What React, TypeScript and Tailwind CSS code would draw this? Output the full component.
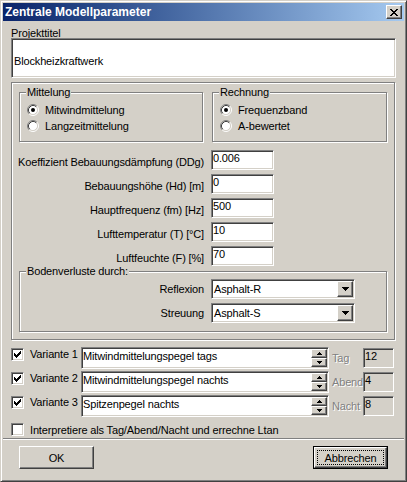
import React from "react";

// classic 3D borders
const sunken =
  "border border-t-[#808080] border-l-[#808080] border-r-white border-b-white shadow-[inset_1px_1px_0_#404040,inset_-1px_-1px_0_#d4d0c8]";
const raised =
  "border border-t-white border-l-white border-r-[#404040] border-b-[#404040] shadow-[inset_-1px_-1px_0_#808080]";
const etched = "border border-[#808080] shadow-[1px_1px_0_#fff,inset_1px_1px_0_#fff]";
const disabledText = "text-[#808080] [text-shadow:1px_1px_0_#fff]";

const CHECK = ["......X", ".....XX", "X...XXX", "XX.XXX.", "XXXXX..", ".XXX...", "..X...."];
const CLOSE = ["XX....XX", ".XX..XX.", "..XXXX..", "...XX...", "..XXXX..", ".XX..XX.", "XX....XX"];
const DOWN = ["XXXXXXX", ".XXXXX.", "..XXX..", "...X..."];
const UP_SM = ["..X..", ".XXX.", "XXXXX"];
const DOWN_SM = ["XXXXX", ".XXX.", "..X.."];

const Pix = ({ rows, color = "#000" }: { rows: string[]; color?: string }) => (
  <svg width={rows[0].length} height={rows.length} shapeRendering="crispEdges" className="block">
    {rows.flatMap((r, y) =>
      r
        .split("")
        .map((c, x) =>
          c === "X" ? <rect key={`${x}-${y}`} x={x} y={y} width={1} height={1} fill={color} /> : null
        )
    )}
  </svg>
);

const CheckBox = ({ checked = false, className = "" }: { checked?: boolean; className?: string }) => (
  <span className={`${sunken} bg-white w-[13px] h-[13px] shrink-0 flex items-center justify-center ${className}`}>
    {checked && <Pix rows={CHECK} />}
  </span>
);

const Radio = ({ checked = false }: { checked?: boolean }) => (
  <svg width={12} height={12} className="shrink-0 block">
    <circle cx={6} cy={6} r={4.5} fill="#fff" />
    <path d="M2.11 9.89A5.5 5.5 0 0 1 9.89 2.11" stroke="#808080" fill="none" />
    <path d="M9.89 2.11A5.5 5.5 0 0 1 2.11 9.89" stroke="#fff" fill="none" />
    <path d="M2.82 9.18A4.5 4.5 0 0 1 9.18 2.82" stroke="#404040" fill="none" />
    <path d="M9.18 2.82A4.5 4.5 0 0 1 2.82 9.18" stroke="#d4d0c8" fill="none" />
    {checked && <circle cx={6} cy={6} r={2} fill="#000" />}
  </svg>
);

const RadioRow = ({ label, checked }: { label: string; checked?: boolean }) => (
  <div className="flex items-center h-[16px] gap-[6px]">
    <Radio checked={checked} />
    <span>{label}</span>
  </div>
);

const Group = ({
  label,
  className,
  children,
}: {
  label: string;
  className: string;
  children: React.ReactNode;
}) => (
  <div className={`relative ${etched} ${className}`}>
    <span className="absolute left-[6px] -top-[8px] px-[1px] bg-[#d4d0c8] leading-[14px]">{label}</span>
    {children}
  </div>
);

const params: [string, string][] = [
  ["Koeffizient Bebauungsdämpfung (DDg)", "0.006"],
  ["Bebauungshöhe (Hd) [m]", "0"],
  ["Hauptfrequenz (fm) [Hz]", "500"],
  ["Lufttemperatur (T) [°C]", "10"],
  ["Luftfeuchte (F) [%]", "70"],
];

const combos: [string, string][] = [
  ["Reflexion", "Asphalt-R"],
  ["Streuung", "Asphalt-S"],
];

const variants: [string, string, string, string][] = [
  ["Variante 1", "Mitwindmittelungspegel tags", "Tag", "12"],
  ["Variante 2", "Mitwindmittelungspegel nachts", "Abend", "4"],
  ["Variante 3", "Spitzenpegel nachts", "Nacht", "8"],
];

export default function App() {
  return (
    <div className="w-[407px] h-[482px] bg-[#d4d0c8] font-['Liberation_Sans',Arial,sans-serif] text-[11px] tracking-[-0.15px] text-black leading-[14px] select-none">
      <div className="w-full h-full border border-t-[#d4d0c8] border-l-[#d4d0c8] border-r-[#404040] border-b-[#404040] shadow-[inset_1px_1px_0_#fff,inset_-1px_-1px_0_#808080] p-[2px] flex flex-col">
        {/* title bar */}
        <div className="h-[18px] shrink-0 bg-linear-to-r from-[#0a246a] to-[#a6caf0] flex items-center justify-between px-[2px]">
          <span className="text-white font-bold text-[12px] tracking-normal leading-[18px]">
            Zentrale Modellparameter
          </span>
          <div className={`${raised} bg-[#d4d0c8] w-[16px] h-[14px] flex items-center justify-center`}>
            <Pix rows={CLOSE} />
          </div>
        </div>

        <div className="pl-[8px] flex flex-col">
          <div className="mt-[5px] h-[12px]">Projekttitel</div>
          <div className={`${sunken} bg-white w-[385px] h-[40px] pl-[2px] pt-[6px] flex items-center`}>
            Blockheizkraftwerk
          </div>

          {/* main panel */}
          <div className={`${etched} mt-[4px] w-[384px] h-[258px] flex flex-col`}>
            <div className="mt-[9px] ml-[7px] flex">
              <Group label="Mittelung" className="w-[184px] h-[50px]">
                <div className="mt-[9px] ml-[7px] flex flex-col">
                  <RadioRow checked label="Mitwindmittelung" />
                  <RadioRow label="Langzeitmittelung" />
                </div>
              </Group>
              <Group label="Rechnung" className="ml-[9px] w-[175px] h-[50px]">
                <div className="mt-[9px] ml-[7px] flex flex-col">
                  <RadioRow checked label="Frequenzband" />
                  <RadioRow label="A-bewertet" />
                </div>
              </Group>
            </div>

            <div className="mt-[8px] flex flex-col gap-[4px]">
              {params.map(([label, value]) => (
                <div key={label} className="flex h-[20px]">
                  <div className="w-[192px] text-right leading-[20px] pt-[2px]">{label}</div>
                  <div className={`${sunken} bg-white ml-[7px] w-[63px] h-[20px] pl-[1px] leading-[14px]`}>
                    {value}
                  </div>
                </div>
              ))}
            </div>

            <Group label="Bodenverluste durch:" className="mt-[5px] ml-[7px] w-[368px] h-[61px]">
              <div className="mt-[7px] flex flex-col gap-[4px]">
                {combos.map(([label, value]) => (
                  <div key={label} className="flex h-[20px]">
                    <div className="w-[184px] text-right leading-[20px]">{label}</div>
                    <div className={`${sunken} bg-white ml-[7px] w-[144px] h-[20px] p-[1px] flex`}>
                      <span className="flex-1 pl-[1px] leading-[16px]">{value}</span>
                      <span className={`${raised} bg-[#d4d0c8] w-[16px] h-full flex items-center justify-center`}>
                        <Pix rows={DOWN} />
                      </span>
                    </div>
                  </div>
                ))}
              </div>
            </Group>
          </div>

          {/* variants */}
          <div className="mt-[7px] flex flex-col gap-[2px]">
            {variants.map(([name, text, tag, val]) => (
              <div key={name} className="flex h-[22px]">
                <CheckBox checked className="mt-[1px]" />
                <span className="ml-[6px] w-[51px] leading-[14px]">{name}</span>
                <div className={`${sunken} bg-white w-[248px] h-[22px] p-[1px] flex`}>
                  <span className="flex-1 leading-[14px]">{text}</span>
                  <div className="w-[16px] flex flex-col">
                    <span className={`${raised} bg-[#d4d0c8] flex-1 flex items-center justify-center`}>
                      <Pix rows={UP_SM} />
                    </span>
                    <span className={`${raised} bg-[#d4d0c8] flex-1 flex items-center justify-center`}>
                      <Pix rows={DOWN_SM} />
                    </span>
                  </div>
                </div>
                <span className={`ml-[3px] w-[31px] self-center ${disabledText}`}>{tag}</span>
                <div className={`${sunken} bg-[#d4d0c8] mt-[1px] w-[31px] h-[20px] pl-[1px] leading-[14px]`}>
                  {val}
                </div>
              </div>
            ))}
          </div>

          <div className="mt-[6px] flex items-center h-[13px]">
            <CheckBox />
            <span className="ml-[6px]">Interpretiere als Tag/Abend/Nacht und errechne Ltan</span>
          </div>
        </div>

        <div className="mt-[2px] h-[2px] border-t border-t-[#808080] border-b border-b-white" />

        <div className="mt-[6px] px-[16px] flex justify-between">
          <button className={`${raised} bg-[#d4d0c8] w-[75px] h-[23px] flex items-center justify-center`}>
            OK
          </button>
          <button className="border border-black w-[75px] h-[23px] flex">
            <span className={`${raised} bg-[#d4d0c8] flex-1 p-[2px] flex`}>
              <span className="flex-1 border border-dotted border-black flex items-center justify-center">
                Abbrechen
              </span>
            </span>
          </button>
        </div>
      </div>
    </div>
  );
}
